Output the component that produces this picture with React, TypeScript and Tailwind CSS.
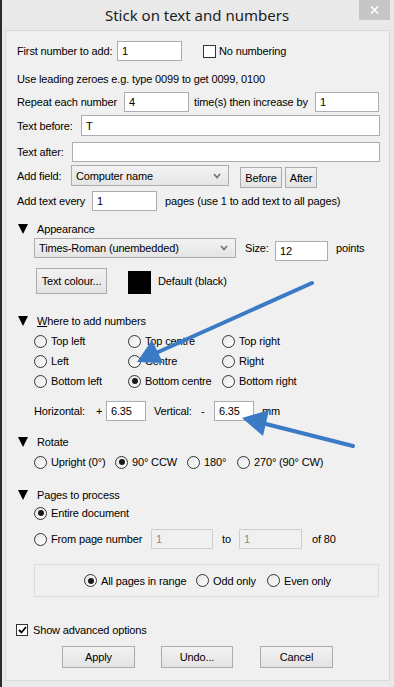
import React from "react";

const Radio = ({ label, checked, className = "" }: { label: string; checked?: boolean; className?: string }) => (
  <div className={`flex items-center h-[20px] ${className}`}>
    <span className="w-[13px] h-[13px] shrink-0 rounded-full border border-[#333] bg-gradient-to-br from-[#e6e6e6] to-white flex items-center justify-center">
      {checked && <span className="w-[6px] h-[6px] rounded-full bg-[#1a1a1a]" />}
    </span>
    <span className="ml-[4px] whitespace-nowrap">{label}</span>
  </div>
);

const Input = ({ value = "", className = "", disabled }: { value?: string; className?: string; disabled?: boolean }) => (
  <div
    className={`h-[20px] border flex items-center pl-[4px] ${
      disabled ? "border-[#cfcfcf] bg-[#f0f0f0] text-[#8a8a8a]" : "border-[#abadb3] bg-white"
    } ${className}`}
  >
    {value}
  </div>
);

const Button = ({ label, className = "" }: { label: string; className?: string }) => (
  <div
    className={`border border-[#acacac] bg-gradient-to-b from-[#f2f2f2] to-[#e3e3e3] flex items-center justify-center ${className}`}
  >
    {label}
  </div>
);

const Select = ({ value, className = "" }: { value: string; className?: string }) => (
  <div
    className={`border border-[#acacac] bg-gradient-to-b from-[#f2f2f2] to-[#e5e5e5] flex items-center justify-between pl-[4px] pr-[7px] ${className}`}
  >
    <span>{value}</span>
    <svg width="8" height="6" viewBox="0 0 8 6">
      <polyline points="1,1 4,4.5 7,1" fill="none" stroke="#707070" strokeWidth="1.6" />
    </svg>
  </div>
);

const Section = ({ children }: { children: React.ReactNode }) => (
  <div className="flex items-center h-[14px] ml-[1px]">
    <svg width="10" height="10" viewBox="0 0 10 10" className="shrink-0">
      <polygon points="0,0 10,0 5,10" fill="#000" />
    </svg>
    <span className="ml-[9px]">{children}</span>
  </div>
);

export default function App() {
  return (
    <div className="relative w-[394px] h-[687px] bg-[#e9e9e9] border-l-2 border-[#2b2b2b] font-['Liberation_Sans',Arial,sans-serif] text-[11px] tracking-[-0.15px] leading-[14px] text-black overflow-hidden">
      {/* title bar */}
      <div className="relative h-[30px] flex items-center justify-center">
        <span className="font-['Noto_Sans',sans-serif] text-[15px] tracking-normal text-[#1b1b1b] -ml-[2px]">
          Stick on text and numbers
        </span>
        <div className="absolute right-[4px] top-0 w-[31px] h-[20px] bg-[#c6c6c6] flex items-center justify-center">
          <svg width="9" height="8" viewBox="0 0 9 8">
            <path d="M1 0.5 L8 7.5 M8 0.5 L1 7.5" stroke="#fff" strokeWidth="1.6" />
          </svg>
        </div>
      </div>

      {/* client area */}
      <div className="ml-[3px] w-[385px] h-[651px] border border-[#dadada] bg-[#f0f0f0] pl-[11px] pt-[10px]">
        <div className="flex items-center h-[20px]">
          <span className="w-[100px]">First number to add:</span>
          <Input value="1" className="w-[65px]" />
          <span className="ml-[21px] w-[13px] h-[13px] border border-[#333] bg-white" />
          <span className="ml-[3px]">No numbering</span>
        </div>

        <div className="mt-[11px] h-[14px]">Use leading zeroes e.g. type 0099 to get 0099, 0100</div>

        <div className="mt-[6px] flex items-center h-[20px]">
          <span className="w-[107px]">Repeat each number</span>
          <Input value="4" className="w-[65px]" />
          <span className="ml-[5px] w-[121px]">time(s) then increase by</span>
          <Input value="1" className="w-[64px]" />
        </div>

        <div className="mt-[3px] flex items-center h-[21px]">
          <span className="w-[64px]">Text before:</span>
          <Input value="T" className="w-[299px] h-[21px]" />
        </div>

        <div className="mt-[6px] flex items-center h-[20px]">
          <span className="w-[55px]">Text after:</span>
          <Input className="w-[308px]" />
        </div>

        <div className="mt-[3px] flex items-start h-[23px]">
          <span className="w-[54px] h-[21px] flex items-center">Add field:</span>
          <Select value="Computer name" className="w-[158px] h-[21px]" />
          <Button label="Before" className="ml-[11px] mt-[2px] w-[42px] h-[21px]" />
          <Button label="After" className="ml-[3px] mt-[2px] w-[32px] h-[21px]" />
        </div>

        <div className="mt-[3px] flex items-center h-[20px]">
          <span className="w-[75px]">Add text every</span>
          <Input value="1" className="w-[65px]" />
          <span className="ml-[8px]">pages (use 1 to add text to all pages)</span>
        </div>

        <div className="mt-[11px]">
          <Section>Appearance</Section>
        </div>

        <div className="mt-[2px] ml-[17px] flex items-start h-[20px]">
          <Select value="Times-Roman (unembedded)" className="w-[202px] h-[20px]" />
          <span className="ml-[9px] w-[30px] h-[20px] flex items-center">Size:</span>
          <Input value="12" className="mt-[3px] w-[53px] h-[19px]" />
          <span className="ml-[8px] h-[20px] flex items-center">points</span>
        </div>

        <div className="mt-[10px] ml-[19px] flex items-end h-[26px]">
          <Button label="Text colour..." className="w-[71px] h-[26px]" />
          <span className="ml-[21px] w-[23px] h-[23px] bg-black" />
          <span className="ml-[7px] self-center">Default (black)</span>
        </div>

        <div className="mt-[20px]">
          <Section>
            <span className="underline">W</span>here to add numbers
          </Section>
        </div>

        <div className="mt-[3px] ml-[17px] grid grid-cols-[94px_94px_94px]">
          <Radio label="Top left" />
          <Radio label="Top centre" />
          <Radio label="Top right" />
          <Radio label="Left" />
          <Radio label="Centre" />
          <Radio label="Right" />
          <Radio label="Bottom left" />
          <Radio label="Bottom centre" checked />
          <Radio label="Bottom right" />
        </div>

        <div className="mt-[10px] ml-[17px] flex items-center h-[20px]">
          <span className="w-[62px]">Horizontal:</span>
          <span className="w-[10px]">+</span>
          <Input value="6.35" className="w-[40px]" />
          <span className="ml-[8px] w-[47px]">Vertical:</span>
          <span className="w-[13px]">-</span>
          <Input value="6.35" className="w-[40px]" />
          <span className="ml-[8px]">mm</span>
        </div>

        <div className="mt-[14px]">
          <Section>Rotate</Section>
        </div>

        <div className="mt-[3px] ml-[17px] flex h-[20px]">
          <Radio label="Upright (0°)" className="w-[81px]" />
          <Radio label="90° CCW" checked className="w-[72px]" />
          <Radio label="180°" className="w-[50px]" />
          <Radio label="270° (90° CW)" />
        </div>

        <div className="mt-[16px]">
          <Section>Pages to process</Section>
        </div>

        <div className="mt-[1px] ml-[17px]">
          <Radio label="Entire document" checked />
        </div>

        <div className="mt-[6px] ml-[17px] flex items-center h-[20px]">
          <Radio label="From page number" className="w-[117px]" />
          <Input value="1" disabled className="w-[62px]" />
          <span className="ml-[9px] w-[17px]">to</span>
          <Input value="1" disabled className="w-[63px]" />
          <span className="ml-[10px]">of 80</span>
        </div>

        <div className="mt-[15px] ml-[17px] w-[345px] h-[33px] border border-[#dcdcdc] flex items-center justify-center pl-[2px]">
          <Radio label="All pages in range" checked className="w-[112px]" />
          <Radio label="Odd only" className="w-[71px]" />
          <Radio label="Even only" />
        </div>

        <div className="mt-[25px] -ml-[1px] flex items-center h-[16px]">
          <span className="w-[12px] h-[12px] border border-[#333] bg-white flex items-center justify-center">
            <svg width="9" height="8" viewBox="0 0 9 8">
              <polyline points="1,4 3.5,6.5 8,1" fill="none" stroke="#000" strokeWidth="1.8" />
            </svg>
          </span>
          <span className="ml-[5px]">Show advanced options</span>
        </div>

        <div className="mt-[8px] ml-[45px] flex h-[22px]">
          <Button label="Apply" className="w-[73px] h-[22px]" />
          <Button label="Undo..." className="ml-[26px] w-[72px] h-[22px]" />
          <Button label="Cancel" className="ml-[27px] w-[73px] h-[22px]" />
        </div>
      </div>

      {/* annotation arrows */}
      <svg className="absolute left-[-2px] top-0 pointer-events-none" width="394" height="687" viewBox="0 0 394 687">
        <line x1="312" y1="283" x2="156" y2="353" stroke="#3b7bc6" strokeWidth="4" strokeLinecap="round" />
        <polygon points="137,362 163,363 152,340" fill="#3b7bc6" />
        <line x1="353" y1="446" x2="266" y2="424" stroke="#3b7bc6" strokeWidth="4" strokeLinecap="round" />
        <polygon points="242,418 269,410 263,436" fill="#3b7bc6" />
      </svg>
    </div>
  );
}
